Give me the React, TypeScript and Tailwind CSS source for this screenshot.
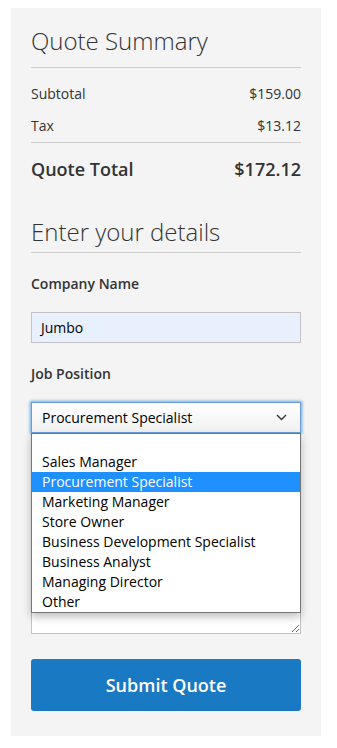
import React from "react";

const positions = [
  "",
  "Sales Manager",
  "Procurement Specialist",
  "Marketing Manager",
  "Store Owner",
  "Business Development Specialist",
  "Business Analyst",
  "Managing Director",
  "Other",
];

function App() {
  return (
    <div className="min-h-screen bg-white pt-[8px] font-['Open_Sans',sans-serif] text-[#333]">
      <div className="mx-[11px] w-[310px] bg-[#f4f4f4] px-[20px] pt-[17px] pb-[25px]">
        {/* summary */}
        <h2 className="border-b border-[#ccc] pb-[10px] text-[24px] leading-[32px] font-light">
          Quote Summary
        </h2>
        <div className="mt-[16px] flex justify-between text-[14px] leading-[20px]">
          <span>Subtotal</span>
          <span>$159.00</span>
        </div>
        <div className="mt-[12px] flex justify-between border-b border-[#ccc] pb-[6px] text-[14px] leading-[20px]">
          <span>Tax</span>
          <span>$13.12</span>
        </div>
        <div className="mt-[14px] flex justify-between text-[18px] leading-[24px] font-semibold">
          <span>Quote Total</span>
          <span>$172.12</span>
        </div>

        {/* form */}
        <h2 className="mt-[35px] border-b border-[#ccc] pb-[4px] text-[24px] leading-[32px] font-light">
          Enter your details
        </h2>
        <div className="mt-[21px] text-[14px] leading-[20px] font-semibold">Company Name</div>
        <div className="mt-[18px] flex h-[31px] items-center border border-[#c2c2c2] bg-[#e8f0fe] px-[9px] text-[14px] text-black">
          Jumbo
        </div>
        <div className="mt-[21px] text-[14px] leading-[20px] font-semibold">Job Position</div>

        <div className="relative mt-[18px]">
          <div className="flex h-[31px] items-center justify-between border border-[#6a9fd6] bg-gradient-to-b from-white to-[#f1f1f1] pr-[13px] pl-[10px] text-[14px] text-black shadow-[0_0_3px_1px_#68a8e0]">
            <span>Procurement Specialist</span>
            <svg width="11" height="7" viewBox="0 0 11 7" fill="none">
              <path d="M1 1l4.5 4.5L10 1" stroke="#333" strokeWidth="1.4" />
            </svg>
          </div>

          {/* comments field, mostly hidden under the open list */}
          <textarea className="mt-[60px] block h-[141px] w-full border border-[#c2c2c2] bg-white" />

          {/* open dropdown */}
          <ul className="absolute top-[31px] right-0 left-0 z-10 border border-[#767676] bg-white text-[14px] text-black shadow-[0_4px_8px_rgba(0,0,0,0.25)]">
            {positions.map((p, i) => (
              <li
                key={i}
                className={
                  (i === 0 ? "h-[18px] " : "h-[20px] ") +
                  "px-[10px] leading-[20px] " +
                  (p === "Procurement Specialist" ? "bg-[#1e90ff] text-white" : "")
                }
              >
                {p}
              </li>
            ))}
          </ul>
        </div>

        <button className="mt-[25px] flex h-[52px] w-full items-center justify-center rounded-[3px] bg-[#1979c3] text-[18px] font-semibold text-white">
          Submit Quote
        </button>
      </div>
    </div>
  );
}

export default App;
